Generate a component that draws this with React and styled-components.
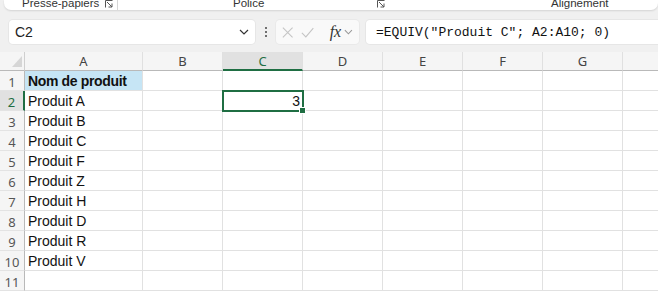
import React from 'react'
import styled, { createGlobalStyle } from 'styled-components'

const GREEN = '#1f6e43'
const COLS = ['A', 'B', 'C', 'D', 'E', 'F', 'G', '']
const WIDTHS = [118, 80, 80, 80, 80, 80, 80, 80]
const DATA = {
  1: { A: 'Nom de produit' },
  2: { A: 'Produit A', C: '3' },
  3: { A: 'Produit B' },
  4: { A: 'Produit C' },
  5: { A: 'Produit F' },
  6: { A: 'Produit Z' },
  7: { A: 'Produit H' },
  8: { A: 'Produit D' },
  9: { A: 'Produit R' },
  10: { A: 'Produit V' },
  11: {},
}

const GlobalStyle = createGlobalStyle`
  html, body {
    margin: 0;
    background: #f0f0f0;
    overflow: hidden;
  }
  body {
    font-family: "Noto Sans", "Liberation Sans", sans-serif;
  }
`

const Page = styled.div`
  width: 658px;
  height: 291px;
  overflow: hidden;
  background: #f0f0f0;
`

const Ribbon = styled.div`
  display: flex;
  height: 10px;
  margin: 0 0 0 4px;
  background: #fff;
  border-radius: 0 0 7px 7px;
  box-shadow: 0 1px 2px rgba(0, 0, 0, 0.12);
  overflow: hidden;
  align-items: flex-end;
`

const Group = styled.div`
  display: flex;
  align-items: flex-end;
  width: ${(p) => (p.$width ? `${p.$width}px` : 'auto')};
  flex: ${(p) => (p.$width ? 'none' : '1')};
  padding-left: ${(p) => p.$pad}px;
  box-sizing: border-box;
  border-right: ${(p) => (p.$sep ? '1px solid #d6d6d6' : 'none')};
  height: 10px;
`

const GroupLabel = styled.span`
  font-family: "Liberation Sans", sans-serif;
  font-size: 11.5px;
  line-height: 14px;
  color: #333;
  white-space: nowrap;
`

const Launcher = styled.svg`
  margin-left: auto;
  margin-right: ${(p) => p.$right}px;
  margin-bottom: 2px;
  flex: none;
`

const FormulaBar = styled.div`
  display: flex;
  align-items: center;
  height: 24px;
  margin: 10px 0 0 9px;
`

const NameBox = styled.div`
  display: flex;
  align-items: center;
  justify-content: space-between;
  width: 246px;
  height: 24px;
  box-sizing: border-box;
  padding: 0 6px 0 6px;
  background: #fff;
  border-radius: 4px;
  box-shadow: 0 0 0 1px #e6e6e6;
  font-family: "Liberation Sans", sans-serif;
  font-size: 14px;
  color: #222;
`

const Dots = styled.div`
  display: flex;
  flex-direction: column;
  gap: 2px;
  margin: 0 9px 0 10px;
  & span {
    width: 2px;
    height: 2px;
    background: #444;
    border-radius: 1px;
  }
`

const Actions = styled.div`
  display: flex;
  align-items: center;
  width: 83px;
  height: 24px;
  box-sizing: border-box;
  padding: 0 6px 0 6px;
  gap: 8px;
  background: #f9f9f9;
  border-radius: 4px;
  box-shadow: 0 0 0 1px #e9e9e9;
`

const Fx = styled.span`
  font-family: "Liberation Serif", serif;
  font-style: italic;
  font-size: 16px;
  color: #333;
  margin-left: 7px;
  margin-right: -5px;
`

const Formula = styled.div`
  flex: 1;
  height: 24px;
  margin-left: 7px;
  padding-left: 10px;
  display: flex;
  align-items: center;
  background: #fff;
  border-radius: 4px 0 0 4px;
  box-shadow: 0 0 0 1px #e6e6e6;
  font-family: "Liberation Mono", monospace;
  font-size: 13px;
  color: #111;
  white-space: nowrap;
`

const Sheet = styled.div`
  display: grid;
  grid-template-columns: 25px ${WIDTHS.map((w) => `${w}px`).join(' ')};
  grid-template-rows: 19px;
  grid-auto-rows: 20px;
  margin-top: 8px;
  background: #fff;
`

const Corner = styled.div`
  background: #f5f5f5;
  border-right: 1px solid #cfcfcf;
  border-bottom: 1px solid #b9b9b9;
  display: flex;
  align-items: flex-end;
  justify-content: flex-end;
  padding: 0 2px 3px 0;
`

const ColHead = styled.div`
  display: flex;
  align-items: center;
  justify-content: center;
  background: ${(p) => (p.$active ? '#e1e1e1' : '#f5f5f5')};
  border-right: 1px solid #e0e0e0;
  border-bottom: ${(p) => (p.$active ? `2px solid ${GREEN}` : '1px solid #b9b9b9')};
  font-family: "Noto Sans", "Liberation Sans", sans-serif;
  font-size: 13px;
  color: ${(p) => (p.$active ? GREEN : '#444')};
  box-sizing: border-box;
`

const RowHead = styled.div`
  display: flex;
  align-items: center;
  justify-content: center;
  background: ${(p) => (p.$active ? '#e1e1e1' : '#f5f5f5')};
  border-right: ${(p) => (p.$active ? `2px solid ${GREEN}` : '1px solid #b9b9b9')};
  border-bottom: 1px solid #e3e3e3;
  font-family: "Noto Sans", "Liberation Sans", sans-serif;
  font-size: 13px;
  color: ${(p) => (p.$active ? GREEN : '#555')};
  box-sizing: border-box;
  padding-top: 2px;
`

const Cell = styled.div`
  position: relative;
  display: flex;
  align-items: flex-end;
  justify-content: ${(p) => (p.$num ? 'flex-end' : 'flex-start')};
  padding: 0 ${(p) => (p.$num ? '2px' : '3px')} 1px 3px;
  background: ${(p) => (p.$fill ? '#c6e5f5' : '#fff')};
  border-right: 1px solid #e1e1e1;
  border-bottom: 1px solid #e1e1e1;
  font-family: "Liberation Sans", sans-serif;
  font-size: 14px;
  font-weight: ${(p) => (p.$bold ? 700 : 400)};
  letter-spacing: ${(p) => (p.$bold ? '-0.35px' : '0')};
  color: #111;
  white-space: nowrap;
  box-sizing: border-box;
  outline: ${(p) => (p.$selected ? `2px solid ${GREEN}` : 'none')};
  outline-offset: -1px;
  z-index: ${(p) => (p.$selected ? 2 : 'auto')};
`

const FillHandle = styled.span`
  position: absolute;
  right: -4px;
  bottom: -4px;
  width: 5px;
  height: 5px;
  background: ${GREEN};
  border: 1px solid #fff;
`

const Chevron = ({ color = '#444' }) => (
  <svg width="10" height="6" viewBox="0 0 10 6">
    <path d="M1 1l4 4 4-4" fill="none" stroke={color} strokeWidth="1.2" />
  </svg>
)

const LaunchIcon = ({ right }) => (
  <Launcher $right={right} width="8" height="8" viewBox="0 0 8 8">
    <path d="M0.5 0.5h7M0.5 0.5v7M2 2l5 5M7 3.5V7H3.5" fill="none" stroke="#555" strokeWidth="1" />
  </Launcher>
)

export default function App() {
  return (
    <Page>
      <GlobalStyle />
      <Ribbon>
        <Group $width={114} $pad={18} $sep>
          <GroupLabel>Presse-papiers</GroupLabel>
          <LaunchIcon right={4} />
        </Group>
        <Group $width={272} $pad={115}>
          <GroupLabel>Police</GroupLabel>
          <LaunchIcon right={5} />
        </Group>
        <Group $pad={161}>
          <GroupLabel>Alignement</GroupLabel>
        </Group>
      </Ribbon>

      <FormulaBar>
        <NameBox>
          C2
          <Chevron color="#333" />
        </NameBox>
        <Dots>
          <span />
          <span />
          <span />
        </Dots>
        <Actions>
          <svg width="13" height="13" viewBox="0 0 13 13">
            <path d="M1 1l11 11M12 1L1 12" stroke="#c4c4c4" strokeWidth="1.2" />
          </svg>
          <svg width="15" height="13" viewBox="0 0 15 13">
            <path d="M1 7l4.5 4.5L14 1.5" fill="none" stroke="#c4c4c4" strokeWidth="1.2" />
          </svg>
          <Fx>fx</Fx>
          <Chevron color="#999" />
        </Actions>
        <Formula>=EQUIV("Produit C"; A2:A10; 0)</Formula>
      </FormulaBar>

      <Sheet>
        <Corner>
          <svg width="10" height="11" viewBox="0 0 10 11">
            <path d="M10 0V11H0z" fill="#d6d6d6" />
          </svg>
        </Corner>
        {COLS.map((c) => (
          <ColHead key={c || 'H'} $active={c === 'C'}>
            {c}
          </ColHead>
        ))}
        {Object.keys(DATA).map((r) => {
          const row = Number(r)
          return (
            <React.Fragment key={r}>
              <RowHead $active={row === 2}>{row}</RowHead>
              {COLS.map((c) => {
                const col = c || 'H'
                const value = DATA[r][col]
                const selected = row === 2 && col === 'C'
                return (
                  <Cell
                    key={col}
                    $fill={row === 1 && col === 'A'}
                    $bold={row === 1}
                    $num={col === 'C'}
                    $selected={selected}
                  >
                    {value}
                    {selected && <FillHandle />}
                  </Cell>
                )
              })}
            </React.Fragment>
          )
        })}
      </Sheet>
    </Page>
  )
}
